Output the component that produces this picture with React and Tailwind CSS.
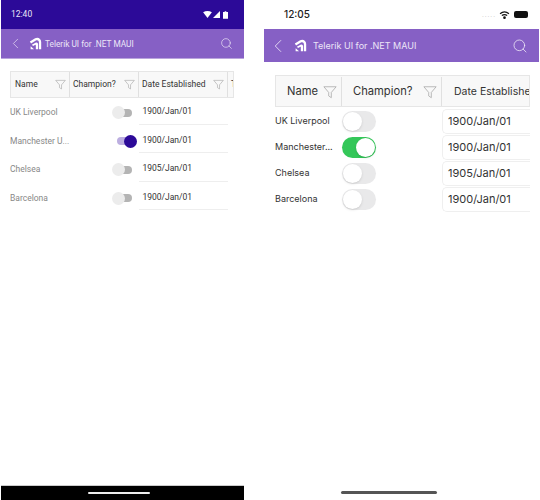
import React from "react";
import { ChevronLeft, Search } from "lucide-react";

const teams = [
  { name: "UK Liverpool", on: false, date: "1900/Jan/01" },
  { name: "Manchester", on: true, date: "1900/Jan/01" },
  { name: "Chelsea", on: false, date: "1905/Jan/01" },
  { name: "Barcelona", on: false, date: "1900/Jan/01" },
];

function Funnel({ className }) {
  return (
    <svg viewBox="0 0 16 16" className={className} fill="none" stroke="#a8a8a8" strokeWidth="0.9" strokeLinejoin="round">
      <path d="M1 2h14L9.5 8.5V14.5L6.5 12.5V8.5Z" />
    </svg>
  );
}

function Logo({ className }) {
  return (
    <svg viewBox="0 0 16 16" className={className} fill="white">
      <path d="M1 5.5 7.5 1.5c3.5-2 7.5.5 7.5 4.5v9h-2.8V6.5c0-2.2-1.8-3.3-3.7-2.2L2.5 8Z" />
      <path d="M3.5 9.5 8 7c1.7-.9 3.2.2 3.2 2v6H8.4v-4.6c0-.7-.5-1-1.1-.7L5 11Z" />
      <path d="M2 11.5 6.2 15H2Z" />
    </svg>
  );
}

function NavBar({ height, left, logoLeft, titleClass, chevronSize, searchSize, searchClass }) {
  return (
    <div className={`flex items-center bg-[#8660c5] text-white ${height}`}>
      <ChevronLeft size={chevronSize} strokeWidth={1} className={left} />
      <Logo className={logoLeft} />
      <span className={titleClass}>Telerik UI for .NET MAUI</span>
      <Search size={searchSize} strokeWidth={1.2} className={searchClass} />
    </div>
  );
}

function AndroidSwitch({ on }) {
  return (
    <div className={`relative h-[8px] w-[15px] rounded-full ${on ? "bg-[#bcaee0]" : "bg-[#b4b4b4]"}`}>
      <div className={`absolute top-[-2.5px] h-[13px] w-[13px] rounded-full ${on ? "left-[7px] bg-[#2c0a98]" : "left-[-5px] bg-[#ececec]"}`} />
    </div>
  );
}

function IosSwitch({ on }) {
  return (
    <div className={`relative h-[21px] w-[34px] rounded-full ${on ? "bg-[#34c759]" : "bg-[#e9e9ea]"}`}>
      <div className={`absolute top-[1px] h-[19px] w-[19px] rounded-full bg-white shadow ${on ? "left-[14px]" : "left-[1px]"}`} />
    </div>
  );
}

function AndroidPhone() {
  return (
    <div className="flex h-[500px] w-[243px] flex-col bg-white font-['Roboto',sans-serif]">
      <div className="flex h-[29px] items-center justify-between bg-[#2c0a98] pl-[10px] pr-[16px] text-[8.5px] text-[#e8e4f6]">
        <span>12:40</span>
        <div className="flex items-center gap-[1px]">
          <svg viewBox="0 0 10 8" className="h-[7px] w-[9px]" fill="white"><path d="M0 1.5C3-.5 7-.5 10 1.5L5 8Z" /></svg>
          <svg viewBox="0 0 8 8" className="h-[7px] w-[7px]" fill="white"><path d="M8 0V8H0Z" /></svg>
          <svg viewBox="0 0 6 9" className="ml-[2px] h-[8px] w-[5px]" fill="white"><path d="M0 1h2V0h2v1h2v8H0Z" /></svg>
        </div>
      </div>
      <NavBar
        height="h-[30px] border-b border-[#b9a4dd]"
        left="ml-[6px] text-[#e8def5]"
        logoLeft="ml-[5px] h-[13px] w-[13px]"
        titleClass="ml-[3px] pt-[1px] text-[8.3px] text-[#ece5f7]"
        chevronSize={17}
        searchSize={13}
        searchClass="ml-auto mr-[11px] text-[#efe9f8]"
      />

      <div className="ml-[9px] mt-[12px] flex h-[27px] w-[224px] overflow-hidden border border-[#e6e6e6] bg-[#f8f8f8] text-[8.5px] text-[#333]">
        <div className="flex w-[59px] shrink-0 items-center justify-between border-r border-[#e0e0e0] pl-[4px] pr-[3px]">
          Name <Funnel className="h-[11px] w-[11px]" />
        </div>
        <div className="flex w-[69px] shrink-0 items-center justify-between border-r border-[#e0e0e0] pl-[3px] pr-[3px]">
          Champion? <Funnel className="h-[11px] w-[11px]" />
        </div>
        <div className="flex w-[89px] shrink-0 items-center justify-between border-r border-[#e0e0e0] pl-[3px] pr-[3px]">
          Date Established <Funnel className="h-[11px] w-[11px]" />
        </div>
        <div className="flex items-center pl-[3px]">T</div>
      </div>

      <div className="ml-[9px] mt-[-2px] flex w-[218px] flex-col">
        {teams.map((t) => (
          <div key={t.name} className="flex h-[28.5px] items-center">
            <span className="mt-[5px] w-[101px] text-[8.5px] text-[#888]">{t.on ? "Manchester U..." : t.name}</span>
            <div className="ml-[4px] mt-[5px] flex w-[21px] justify-center"><AndroidSwitch on={t.on} /></div>
            <div className="ml-[4px] flex h-full w-[89px] items-center border-b border-[#eeeeee] pt-[4px] text-[8.5px] text-[#333]">
              <span className="pl-[3px]">{t.date}</span>
            </div>
          </div>
        ))}
      </div>

      <div className="mt-auto flex h-[15px] items-center justify-center border-t border-[#ccc] bg-black">
        <div className="ml-[-8px] h-[2px] w-[62px] rounded-full bg-[#eee]" />
      </div>
    </div>
  );
}

function IosPhone() {
  return (
    <div className="ml-[20px] flex h-[500px] w-[275px] flex-col bg-white font-['Inter',sans-serif]">
      <div className="flex h-[29px] items-center justify-between pl-[20px] pr-[11px] text-[10px] font-medium text-[#222]">
        <span>12:05</span>
        <div className="flex items-center gap-[3px]">
          <span className="text-[6px] leading-none tracking-[1px] text-[#bbb]">.....</span>
          <svg viewBox="0 0 12 9" className="h-[8px] w-[11px]" fill="none" stroke="#111" strokeWidth="1.4">
            <path d="M1 3C4 .5 8 .5 11 3M3 5.2c2-1.5 4-1.5 6 0" />
            <circle cx="6" cy="7.5" r="0.8" fill="#111" />
          </svg>
          <div className="ml-[1px] h-[7px] w-[14px] rounded-[2px] bg-[#111]" />
        </div>
      </div>
      <NavBar
        height="h-[33px]"
        left="ml-[3px] text-[#e8def5]"
        logoLeft="ml-[5px] h-[13px] w-[13px]"
        titleClass="ml-[6px] text-[9px] text-[#ece5f7]"
        chevronSize={22}
        searchSize={16}
        searchClass="ml-auto mr-[11px] text-[#efe9f8]"
      />

      <div className="ml-[11px] mt-[13px] flex h-[32px] w-[255px] overflow-hidden border border-[#e6e6e6] bg-[#f8f8f8] pt-[1px] text-[11.2px] text-[#333]">
        <div className="flex w-[66px] shrink-0 items-center justify-between border-r border-[#e0e0e0] pl-[11px] pr-[4px]">
          Name <Funnel className="h-[14px] w-[14px]" />
        </div>
        <div className="flex w-[100px] shrink-0 items-center justify-between border-r border-[#e0e0e0] pl-[11px] pr-[4px]">
          Champion? <Funnel className="h-[14px] w-[14px]" />
        </div>
        <div className="flex items-center whitespace-nowrap pl-[12px] text-[10.5px]">Date Established</div>
      </div>

      <div className="ml-[11px] mt-[1px] flex w-[255px] flex-col">
        {teams.map((t) => (
          <div key={t.name} className="flex h-[26px] items-center">
            <span className="w-[67px] text-[9px] text-[#333]">{t.on ? "Manchester..." : t.name}</span>
            <IosSwitch on={t.on} />
            <div className="ml-[66px] flex h-[25px] flex-1 items-center rounded-l-[5px] border border-r-0 border-[#efefef] pl-[5px] text-[11px] text-[#333]">
              {t.date}
            </div>
          </div>
        ))}
      </div>

      <div className="mb-[6px] mt-auto flex justify-center">
        <div className="ml-[-26px] h-[3px] w-[96px] rounded-full bg-[#555]" />
      </div>
    </div>
  );
}

export default function App() {
  return (
    <div className="flex h-[500px] w-[540px] overflow-hidden bg-white pl-[1px]">
      <AndroidPhone />
      <IosPhone />
    </div>
  );
}
